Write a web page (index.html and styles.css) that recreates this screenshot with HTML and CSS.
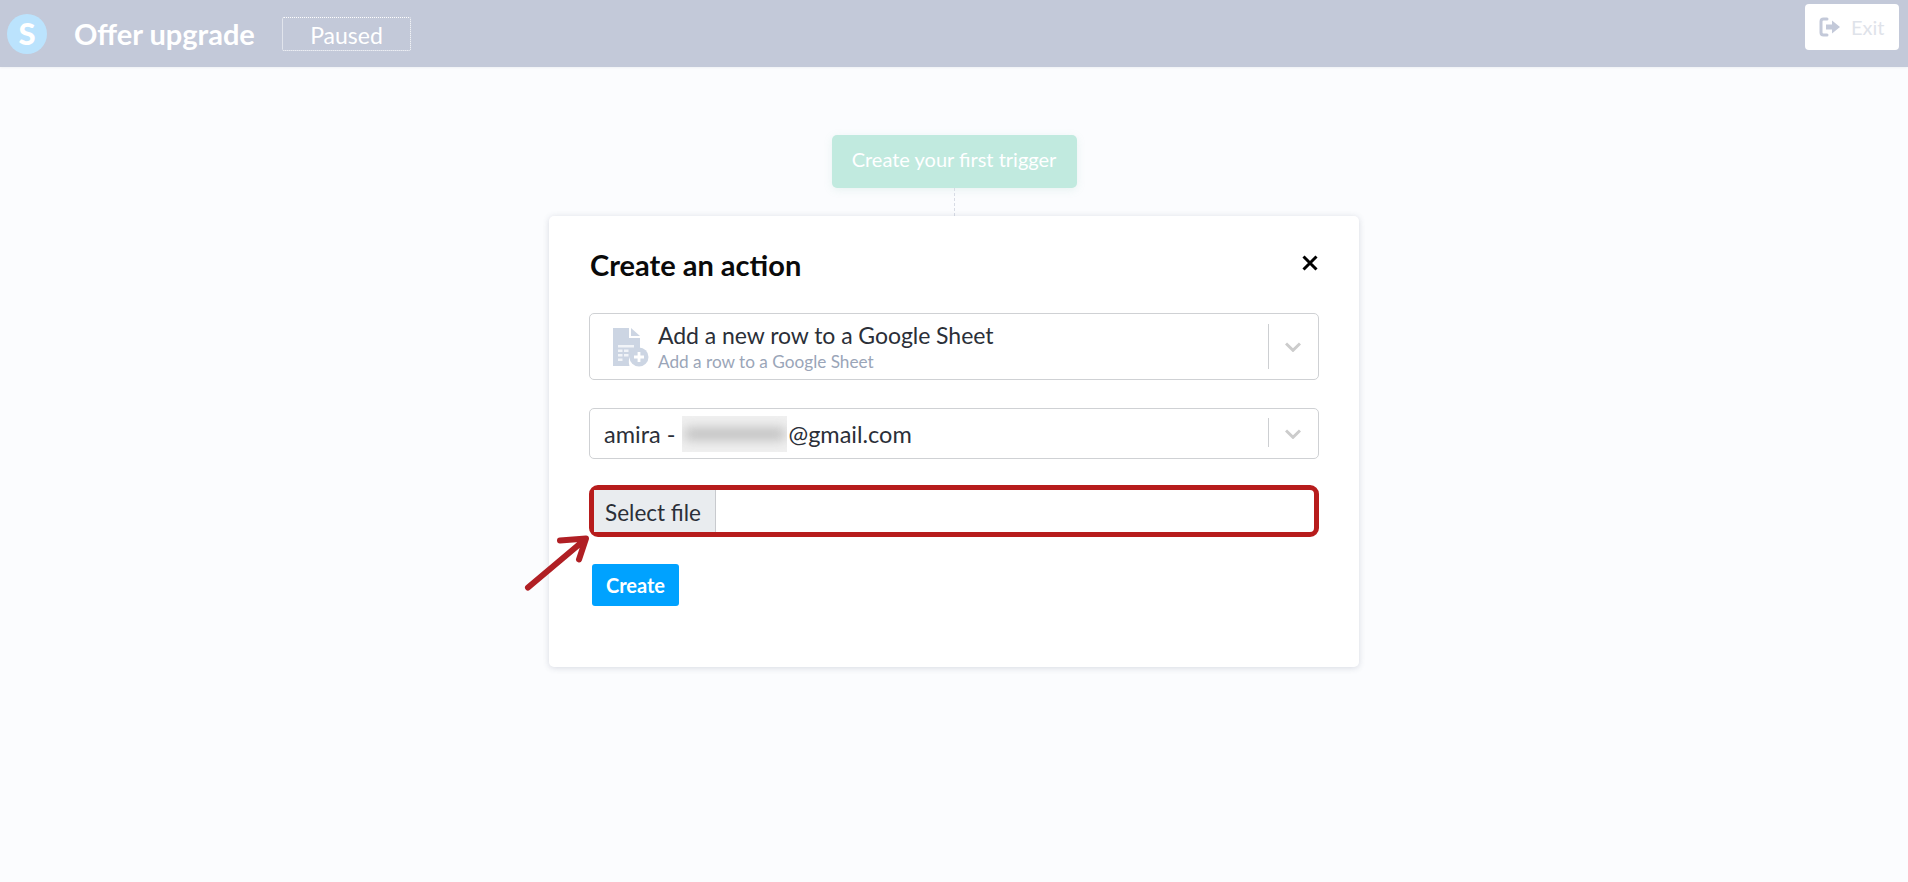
FILE: index.html
```html
<!DOCTYPE html>
<html lang="en">
<head>
<meta charset="utf-8">
<title>Offer upgrade</title>
<link rel="stylesheet" href="styles.css">
</head>
<body>
<header class="topbar">
  <div class="logo">S</div>
  <h1 class="flow-name">Offer upgrade</h1>
  <div class="status">Paused</div>
  <button class="exit">
    <svg class="exit-icon" viewBox="0 0 22 20" width="22" height="20"><path d="M8 2H4.500A2.500 2.500 0 0 0 2 4.500v11A2.500 2.500 0 0 0 4.500 18H8" fill="none" stroke="currentColor" stroke-width="3" stroke-linecap="round"/><path d="M7 7.500h6V3.500l8 6.500-8 6.500v-4H7z" fill="currentColor"/></svg>
    <span>Exit</span>
  </button>
</header>
<main class="canvas">
  <button class="trigger">Create your first trigger</button>
  <div class="connector"></div>
  <section class="card">
    <div class="card-head">
      <h2 class="card-title">Create an action</h2>
      <svg class="close" viewBox="0 0 16 16" width="16" height="16"><path d="M1.500 1.500l13 13M14.500 1.500l-13 13" stroke="#000" stroke-width="3" fill="none"/></svg>
    </div>
    <div class="select select-tall">
      <svg class="doc-icon" viewBox="0 0 36 40" width="36" height="40">
        <path d="M0 1h16v10h11v12.500A11.500 11.500 0 0 0 16.500 39H0z" fill="#ccd5e3"/>
        <path d="M18 1l9 8h-9z" fill="#ccd5e3"/>
        <path d="M5 18h16v2.500H5zM5 22.500h4.500v2.500H5zM11 22.500h4.500v2.500H11zM5 27h4.500v2.500H5zM11 27h4.500v2.500H11zM5 31.500h4.500V34H5z" fill="#f1f4f8"/>
        <circle cx="26" cy="30" r="9.500" fill="#ccd5e3"/>
        <path d="M26 25v10M21 30h10" stroke="#fff" stroke-width="2.800"/>
      </svg>
      <div class="select-text">
        <div class="select-main">Add a new row to a Google Sheet</div>
        <div class="select-sub">Add a row to a Google Sheet</div>
      </div>
      <div class="select-divider divider-tall"></div>
      <svg class="chevron" viewBox="0 0 16 10" width="16" height="10"><path d="M1 1.500L8 8.300l7-6.800" fill="none" stroke="#ccc" stroke-width="3"/></svg>
    </div>
    <div class="select select-short">
      <div class="account">amira - <span class="redacted"><span class="redacted-fill"></span></span>@gmail.com</div>
      <div class="select-divider divider-short"></div>
      <svg class="chevron" viewBox="0 0 16 10" width="16" height="10"><path d="M1 1.500L8 8.300l7-6.800" fill="none" stroke="#ccc" stroke-width="3"/></svg>
    </div>
    <div class="file-field">
      <div class="file-button">Select file</div>
    </div>
    <button class="create">Create</button>
    <svg class="arrow" viewBox="0 0 70 62" width="70" height="62"><path d="M4 53.500L61 5.500M36 6.500l26-2-7 21" fill="none" stroke="#b01f24" stroke-width="6" stroke-linecap="round" stroke-linejoin="round"/></svg>
  </section>
</main>
</body>
</html>
```
FILE: styles.css
```css
* { box-sizing: border-box; }
html, body { height: 100%; }
body {
  margin: 0;
  overflow: hidden;
  background: #fbfcfe;
  color: #2b2f38;
  font-family: "Lato", "Noto Sans", sans-serif;
}
button { font-family: inherit; border: 0; padding: 0; }

.topbar {
  display: flex;
  align-items: center;
  height: 67px;
  padding: 0 9px 0 7px;
  background: #c3c9d9;
  box-shadow: 0 1px 2px rgba(90, 100, 130, 0.08);
}
.logo {
  display: flex;
  align-items: center;
  justify-content: center;
  width: 40px;
  height: 40px;
  border-radius: 50%;
  background: #bbe3fd;
  color: #fff;
  font-size: 31px;
  font-weight: 900;
  line-height: 1;
}
.flow-name {
  flex: none;
  width: 180px;
  margin: 0 0 0 27px;
  color: #fff;
  font-size: 29px;
  font-weight: 700;
  line-height: 1;
  white-space: nowrap;
}
.status {
  display: flex;
  align-items: center;
  justify-content: center;
  width: 129px;
  height: 34px;
  margin-left: 28px;
  padding-top: 2px;
  border: 1px dotted #fff;
  border-radius: 2px;
  color: #fff;
  font-size: 23px;
}
.exit {
  display: flex;
  align-items: center;
  gap: 10px;
  width: 94px;
  height: 46px;
  margin: -13px 0 0 auto;
  padding-left: 14px;
  border-radius: 4px;
  background: #fff;
  color: #c3c9d9;
  font-size: 20px;
}
.exit span { color: #dfe3ea; }
.exit-icon { flex: none; }

.canvas {
  display: flex;
  flex-direction: column;
  align-items: center;
  padding-top: 68px;
}
.trigger {
  width: 245px;
  height: 53px;
  padding-bottom: 5px;
  border-radius: 5px;
  background: #c1eadf;
  box-shadow: 0 2px 8px rgba(120, 190, 170, 0.15);
  color: #fff;
  font-size: 20px;
  font-weight: 400;
}
.connector {
  height: 28px;
  border-left: 1px dashed #d8dce5;
}
.card {
  position: relative;
  width: 810px;
  height: 451px;
  padding: 30px 40px 0 40px;
  border-radius: 5px;
  background: #fff;
  box-shadow: 0 1px 6px rgba(70, 80, 110, 0.2);
}
.card-head {
  display: flex;
  align-items: center;
  justify-content: space-between;
  height: 40px;
  margin-bottom: 27px;
}
.card-title {
  margin: -3px 0 0 1px;
  color: #0a0a0a;
  font-size: 29px;
  font-weight: 700;
  line-height: 1;
}
.close { margin: -6px 1px 0 0; }

.select {
  display: flex;
  align-items: center;
  border: 1px solid #cfd1d4;
  border-radius: 5px;
  background: #fff;
}
.select-tall { height: 67px; margin-bottom: 28px; padding-left: 23px; }
.select-short { height: 51px; margin-bottom: 26px; padding-left: 14px; }
.doc-icon { flex: none; margin-right: 9px; }
.select-text { flex: 1; margin-top: 1px; }
.select-main { font-size: 23px; line-height: 26px; letter-spacing: -0.05px; }
.select-sub { margin-top: 4px; color: #9aa5b8; font-size: 17.200px; line-height: 20px; }
.select-divider { width: 1px; background: #cdcfd2; }
.divider-tall { height: 45px; margin-bottom: 1px; }
.divider-short { height: 29px; margin-top: -3px; }
.chevron { flex: none; margin: 0 17px 0 16px; }
.select-short .chevron { margin-top: 1px; }
.account {
  display: flex;
  align-items: center;
  flex: 1;
  font-size: 23.500px;
  white-space: pre;
}
.redacted {
  display: block;
  overflow: hidden;
  width: 105px;
  height: 36px;
  margin: 0 1px 0 1px;
  background: #f0f0f0;
}
.redacted-fill {
  display: block;
  width: 95%;
  height: 12px;
  margin: 12px 0 0 3px;
  background: #bdbdbd;
  filter: blur(6px);
}

.file-field {
  display: flex;
  height: 52px;
  margin-bottom: 27px;
  border: 5px solid #b71c1c;
  border-radius: 9px;
  background: #fff;
}
.file-button {
  display: flex;
  align-items: center;
  justify-content: center;
  width: 122px;
  padding: 2px 3px 0 0;
  border-right: 1px solid #c8cace;
  background: #e9ecef;
  font-size: 22.500px;
}
.create {
  display: block;
  width: 87px;
  height: 42px;
  margin-left: 3px;
  border-radius: 3px;
  background: #00a2ff;
  color: #fff;
  font-size: 20px;
  font-weight: 700;
}
.arrow {
  position: absolute;
  top: 318px;
  left: -25px;
}
```
